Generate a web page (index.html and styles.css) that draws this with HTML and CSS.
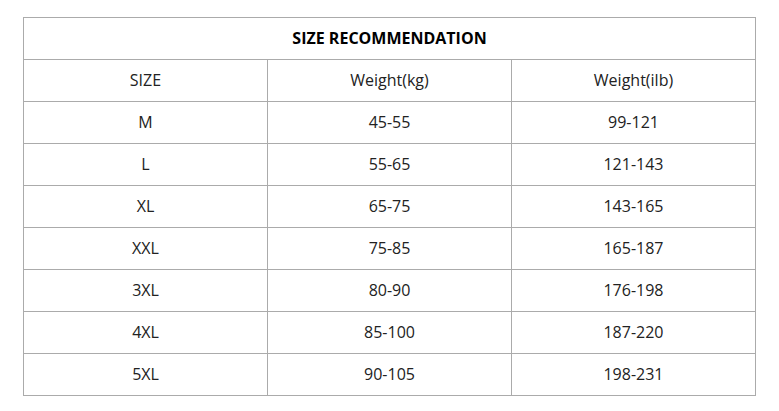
FILE: index.html
```html
<!DOCTYPE html>
<html>
<head>
<meta charset="utf-8">
<link rel="stylesheet" href="styles.css">
</head>
<body>
<table class="size-table">
  <thead>
    <tr><th colspan="3" class="title">SIZE RECOMMENDATION</th></tr>
  </thead>
  <tbody>
    <tr><td>SIZE</td><td>Weight(kg)</td><td>Weight(ilb)</td></tr>
    <tr><td>M</td><td>45-55</td><td>99-121</td></tr>
    <tr><td>L</td><td>55-65</td><td>121-143</td></tr>
    <tr><td>XL</td><td>65-75</td><td>143-165</td></tr>
    <tr><td>XXL</td><td>75-85</td><td>165-187</td></tr>
    <tr><td>3XL</td><td>80-90</td><td>176-198</td></tr>
    <tr><td>4XL</td><td>85-100</td><td>187-220</td></tr>
    <tr><td>5XL</td><td>90-105</td><td>198-231</td></tr>
  </tbody>
</table>
</body>
</html>
```
FILE: styles.css
```css
html, body {
  margin: 0;
  padding: 0;
  background: #fff;
}
body {
  padding: 17px 0 0 23px;
  font-family: "Open Sans", "DejaVu Sans", sans-serif;
}
.size-table {
  border-collapse: collapse;
  width: 733px;
  table-layout: fixed;
}
.size-table th,
.size-table td {
  border: 1px solid #ababab;
  height: 39px;
  padding: 0 0 2px;
  text-align: center;
  vertical-align: middle;
  font-size: 16px;
  line-height: 20px;
  color: #222;
}
.size-table .title {
  font-weight: 700;
  color: #000;
}
```
